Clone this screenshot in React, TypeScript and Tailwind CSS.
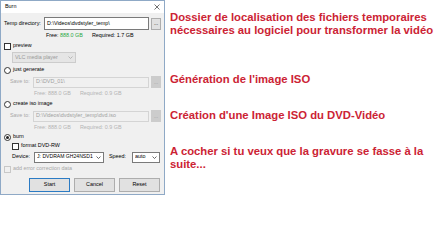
import { ReactNode } from 'react';

const ui = { fontFamily: '"Liberation Sans", Arial, sans-serif' };

function Check({ label, disabled }: { label: string; disabled?: boolean }) {
    return (
        <div className="flex items-center gap-[2px] h-[8px]">
            <span className={`w-[7px] h-[7px] shrink-0 border ${disabled ? 'border-[#c8c8c8] bg-[#f0f0f0]' : 'border-[#333] bg-white'}`} />
            <span className={disabled ? 'text-[#a8a8a8]' : 'text-black'}>{label}</span>
        </div>
    );
}

function Radio({ label, checked }: { label: string; checked?: boolean }) {
    return (
        <div className="flex items-center gap-[2px] h-[8px]">
            <span className="w-[7px] h-[7px] shrink-0 rounded-full border border-[#333] bg-white flex items-center justify-center">
                {checked && <span className="w-[3px] h-[3px] rounded-full bg-[#222]" />}
            </span>
            <span>{label}</span>
        </div>
    );
}

function Dots({ disabled }: { disabled?: boolean }) {
    return (
        <div className={`w-[10px] h-[12px] shrink-0 border flex items-center justify-center text-[5px] ${disabled ? 'bg-[#cccccc] border-[#cccccc] text-[#999]' : 'bg-[#e1e1e1] border-[#adadad] text-black'}`}>
            ...
        </div>
    );
}

function FreeLine({ req, disabled }: { req: string; disabled?: boolean }) {
    return (
        <div className={`flex gap-[9px] h-[7px] items-center ${disabled ? 'text-[#b4b4b4]' : 'text-black'}`}>
            <span>
                Free: <span className={disabled ? '' : 'text-[#2aa844]'}>888.0 GB</span>
            </span>
            <span>Required: {req}</span>
        </div>
    );
}

function SaveTo({ path }: { path: string }) {
    return (
        <div className="flex items-center h-[12px] pl-[7px] pr-[1px] gap-[2px]">
            <span className="text-[#a8a8a8] w-[21px] shrink-0">Save to:</span>
            <div className="flex-1 min-w-0 h-[11px] border border-[#d4d4d4] bg-[#f0f0f0] text-[#a0a0a0] flex items-center px-[2px] overflow-hidden">{path}</div>
            <Dots disabled />
        </div>
    );
}

function Select({ children, w, disabled }: { children: ReactNode; w: string; disabled?: boolean }) {
    return (
        <div className={`${w} h-[11px] shrink-0 border flex items-center justify-between gap-[1px] px-[2px] overflow-hidden ${disabled ? 'bg-[#e5e5e5] border-[#cccccc] text-[#9a9a9a]' : 'bg-white border-[#7a7a7a] text-black'}`}>
            <span className="overflow-hidden">{children}</span>
            <svg width="5" height="3" viewBox="0 0 5 3" className="shrink-0">
                <path d="M0.5 0.5 L2.5 2.5 L4.5 0.5" fill="none" stroke={disabled ? '#aaa' : '#444'} strokeWidth="0.8" />
            </svg>
        </div>
    );
}

function Btn({ label, primary }: { label: string; primary?: boolean }) {
    return (
        <div className={`w-[41px] h-[14px] flex items-center justify-center bg-[#e1e1e1] ${primary ? 'border-[1.5px] border-[#2b7bc4]' : 'border border-[#adadad]'}`}>
            {label}
        </div>
    );
}

function BurnDialog() {
    return (
        <div className="w-[165px] h-[195px] shrink-0 border border-[#8fa9c6] bg-[#f0f0f0] flex flex-col text-[5.4px] leading-none text-black whitespace-nowrap" style={ui}>
            <div className="h-[12px] bg-white flex items-center justify-between pl-[4px] pr-[4px]">
                <span>Burn</span>
                <svg width="6" height="6" viewBox="0 0 6 6">
                    <path d="M0.5 0.5 L5.5 5.5 M5.5 0.5 L0.5 5.5" stroke="#333" strokeWidth="0.7" />
                </svg>
            </div>
            <div className="flex flex-col px-[2px] pt-[4px]">
                <div className="flex items-center h-[13px] gap-[2px] pl-[1px] pr-[1px]">
                    <span className="w-[38px] shrink-0">Temp directory:</span>
                    <div className="flex-1 min-w-0 h-[13px] border border-[#7a7a7a] bg-white flex items-center px-[2px]">D:\Videos\dvdstyler_temp\</div>
                    <Dots />
                </div>
                <div className="pl-[43px] mt-[2px]">
                    <FreeLine req="1.7 GB" />
                </div>
                <div className="mt-[3px] pl-[1px]">
                    <Check label="preview" />
                </div>
                <div className="mt-[2px] pl-[9px]">
                    <Select w="w-[64px]" disabled>VLC media player</Select>
                </div>
                <div className="mt-[3px] pl-[1px]">
                    <Radio label="just generate" />
                </div>
                <div className="mt-[2px]">
                    <SaveTo path="D:\DVD_01\" />
                </div>
                <div className="pl-[31px] mt-[2px]">
                    <FreeLine req="0.9 GB" disabled />
                </div>
                <div className="mt-[3px] pl-[1px]">
                    <Radio label="create iso image" />
                </div>
                <div className="mt-[2px]">
                    <SaveTo path="D:\Videos\dvdstyler_temp\dvd.iso" />
                </div>
                <div className="pl-[31px] mt-[2px]">
                    <FreeLine req="0.9 GB" disabled />
                </div>
                <div className="mt-[2px] pl-[1px]">
                    <Radio label="burn" checked />
                </div>
                <div className="mt-[1px] pl-[9px]">
                    <Check label="format DVD-RW" />
                </div>
                <div className="mt-[1px] pl-[9px] flex items-center h-[12px] gap-[2px]">
                    <span className="w-[20px] shrink-0">Device:</span>
                    <Select w="w-[70px] text-[5.1px]">J: DVDRAM GH24NSD1</Select>
                    <span className="ml-[3px] w-[21px] shrink-0">Speed:</span>
                    <Select w="w-[28px]">auto</Select>
                </div>
                <div className="mt-[2px] pl-[1px]">
                    <Check label="add error correction data" disabled />
                </div>
                <div className="mt-[5px] flex justify-end gap-[4px] pr-[2px]">
                    <Btn label="Start" primary />
                    <Btn label="Cancel" />
                    <Btn label="Reset" />
                </div>
            </div>
        </div>
    );
}

export default function App() {
    return (
        <div className="w-[440px] h-[248px] bg-white flex items-start overflow-hidden">
            <BurnDialog />
            <div
                className="ml-[5px] pt-[11px] flex flex-col text-[11.3px] leading-[13px] font-bold text-[#cc2334] whitespace-nowrap"
                style={{ fontFamily: '"Liberation Sans", Arial, sans-serif' }}
            >
                <p>Dossier de localisation des fichiers temporaires</p>
                <p>nécessaires au logiciel pour transformer la vidéo</p>
                <p className="mt-[36px]">Génération de l'image ISO</p>
                <p className="mt-[23px]">Création d'une Image ISO du DVD-Vidéo</p>
                <p className="mt-[23px]">A cocher si tu veux que la gravure se fasse à la</p>
                <p>suite...</p>
            </div>
        </div>
    );
}
